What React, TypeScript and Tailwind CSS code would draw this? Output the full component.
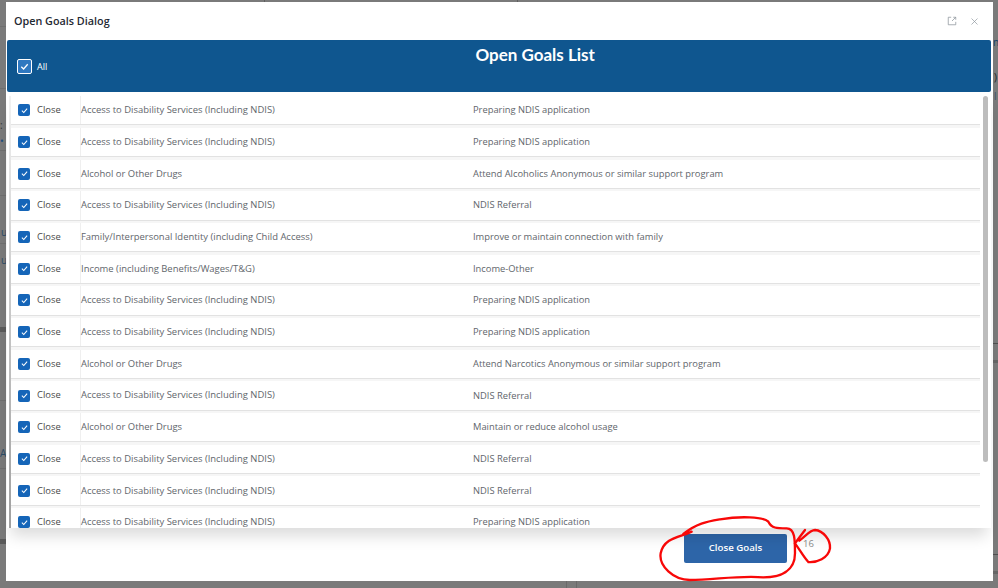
const rows = [
  ["Access to Disability Services (Including NDIS)", "Preparing NDIS application"],
  ["Access to Disability Services (Including NDIS)", "Preparing NDIS application"],
  ["Alcohol or Other Drugs", "Attend Alcoholics Anonymous or similar support program"],
  ["Access to Disability Services (Including NDIS)", "NDIS Referral"],
  ["Family/Interpersonal Identity (including Child Access)", "Improve or maintain connection with family"],
  ["Income (including Benefits/Wages/T&G)", "Income-Other"],
  ["Access to Disability Services (Including NDIS)", "Preparing NDIS application"],
  ["Access to Disability Services (Including NDIS)", "Preparing NDIS application"],
  ["Alcohol or Other Drugs", "Attend Narcotics Anonymous or similar support program"],
  ["Access to Disability Services (Including NDIS)", "NDIS Referral"],
  ["Alcohol or Other Drugs", "Maintain or reduce alcohol usage"],
  ["Access to Disability Services (Including NDIS)", "NDIS Referral"],
  ["Access to Disability Services (Including NDIS)", "NDIS Referral"],
  ["Access to Disability Services (Including NDIS)", "Preparing NDIS application"],
];

// Fragments of the dimmed page that show around the modal: [left, top, width, height, colour]
const backdropMarks: [number, number, number, number, string][] = [
  [0, 26, 6, 1, "#6f6f6f"],
  [0, 88, 6, 1, "#6f6f6f"],
  [0, 150, 6, 1, "#6f6f6f"],
  [0, 195, 6, 1, "#6f6f6f"],
  [0, 243, 6, 1, "#6f6f6f"],
  [0, 327, 6, 5, "#5a5a5a"],
  [0, 400, 6, 1, "#6f6f6f"],
  [0, 468, 6, 1, "#6f6f6f"],
  [0, 539, 6, 5, "#5a5a5a"],
  [993, 343, 5, 1, "#4f4f4f"],
  [993, 360, 5, 3, "#666666"],
  [993, 554, 5, 1, "#4f4f4f"],
  [993, 571, 5, 3, "#666666"],
  [264, 0, 1, 2, "#5f5f5f"],
  [517, 0, 1, 2, "#5f5f5f"],
  [566, 581, 1, 7, "#6a6a6a"],
  [576, 581, 1, 7, "#6a6a6a"],
];

const backdropText: [number, number, string, string][] = [
  [0, 118, ":", "#333333"],
  [0, 134, "•", "#1d4f80"],
  [1, 225, "u", "#2a4a66"],
  [1, 253, "u", "#2a4a66"],
  [0, 446, "A", "#2a4a66"],
  [993, 35, "n", "#123f66"],
  [994, 70, ")", "#222222"],
  [994, 89, "l", "#3f5568"],
];

function Check({ outlined }: { outlined?: boolean }) {
  return (
    <span className={outlined
      ? "flex h-[15px] w-[15px] items-center justify-center rounded-[2px] border border-white bg-[#2f78c0]"
      : "flex h-[12px] w-[12px] items-center justify-center rounded-[2px] bg-[#1565b8]"}>
      <svg viewBox="0 0 12 12" className={outlined ? "h-[11px] w-[11px]" : "h-[9px] w-[9px]"} fill="none" stroke="white" strokeWidth="1.4">
        <path d="M2.5 6.3 L5 8.7 L9.5 3.5" />
      </svg>
    </span>
  );
}

export default function App() {
  return (
    <div className="relative h-[588px] w-[998px] overflow-hidden bg-[#7a7a7a] pl-[6px] pt-[2px] font-['Open_Sans',sans-serif]">
      {backdropMarks.map(([left, top, width, height, background], i) => (
        <div key={i} className="absolute" style={{ left, top, width, height, background }} />
      ))}
      {backdropText.map(([left, top, text, color], i) => (
        <span key={i} className="absolute text-[10px] leading-[14px]" style={{ left, top, color }}>{text}</span>
      ))}
      <div className="relative flex h-[579px] w-[987px] flex-col bg-white">
        <div className="flex h-[38px] shrink-0 items-center justify-between pl-[8px] pr-[14px]">
          <span className="text-[10.8px] font-semibold text-[#1f2933]">Open Goals Dialog</span>
          <div className="flex items-center gap-[13px] text-[#8b949b]">
            <svg viewBox="0 0 12 12" className="h-[10px] w-[10px]" fill="none" stroke="currentColor" strokeWidth="0.9">
              <path d="M5 1.5H1.5V10.5H10.5V7" />
              <path d="M6 6L10.5 1.5M7.5 1.5H10.5V4.5" />
            </svg>
            <svg viewBox="0 0 12 12" className="h-[9px] w-[9px]" fill="none" stroke="currentColor" strokeWidth="0.9">
              <path d="M2 2L10 10M10 2L2 10" />
            </svg>
          </div>
        </div>
        <div className="ml-[1px] flex h-[52px] w-[984px] shrink-0 rounded-[2px] bg-[#0f568f]">
          <div className="flex items-center gap-[5px] pl-[10px] pt-[1px]">
            <Check outlined />
            <span className="text-[9px] text-white">All</span>
          </div>
          <h1 className="ml-[32px] flex-1 pt-[4px] text-center font-['Lato',sans-serif] text-[17px] font-bold leading-[22px] text-white">Open Goals List</h1>
        </div>
        <div className="relative ml-[1px] h-[436px] w-[984px] shrink-0 overflow-hidden pl-[4px] pt-[4.2px] shadow-[0_12px_14px_-4px_rgba(0,0,0,0.14)]">
          <div className="absolute bottom-0 left-[2px] top-[4px] w-[2px] bg-gradient-to-b from-[#f2f2f2] to-[#a0a0a0]" />
          {rows.map((r, i) => (
            <div key={i} className="flex h-[31.69px] w-[969px] flex-col">
              <div className="flex flex-1">
                <div className="flex w-[69px] items-center gap-[7px] pl-[7px]">
                  <Check />
                  <span className="text-[9.4px] text-[#4a4a4a]">Close</span>
                </div>
                <div className="flex w-[393px] items-center border-l border-[#efefef] text-[9.45px] text-[#5f666c]">{r[0]}</div>
                <div className="flex flex-1 items-center text-[9.35px] text-[#5f666c]">{r[1]}</div>
              </div>
              <div className="h-[3.4px] shrink-0 border-t border-[#e2e2e2] bg-[#f6f6f6]" />
            </div>
          ))}
          <div className="absolute right-[3px] top-[4px] h-[366px] w-[5px] rounded-full bg-[#bdbdbd]" />
        </div>
        <div className="flex items-start pl-[678px] pt-[6px]">
          <button className="h-[29px] w-[103px] rounded-[2px] bg-[#2d65a8] text-[9.7px] font-semibold text-white">Close Goals</button>
          <span className="ml-[16px] mt-[3px] text-[9.5px] text-[#8a8a8a]">16</span>
        </div>
      </div>
      <svg className="absolute left-[640px] top-[440px] h-[148px] w-[358px]" viewBox="0 0 1074 444" fill="none" stroke="#f80808" strokeWidth="7" strokeLinecap="round">
        <path d="M155 275 C120 292 72 292 62 340 C56 378 100 420 150 420 C220 420 300 405 370 412 C420 412 465 395 465 340 C465 300 465 265 440 265 C410 265 395 265 385 245 C370 230 300 228 240 238 C200 245 170 250 130 282" />
        <path d="M495 270 L465 310 C480 330 490 350 505 366 C530 368 565 355 570 325 C572 300 550 272 525 270 C512 270 505 280 478 302" />
      </svg>
    </div>
  );
}
